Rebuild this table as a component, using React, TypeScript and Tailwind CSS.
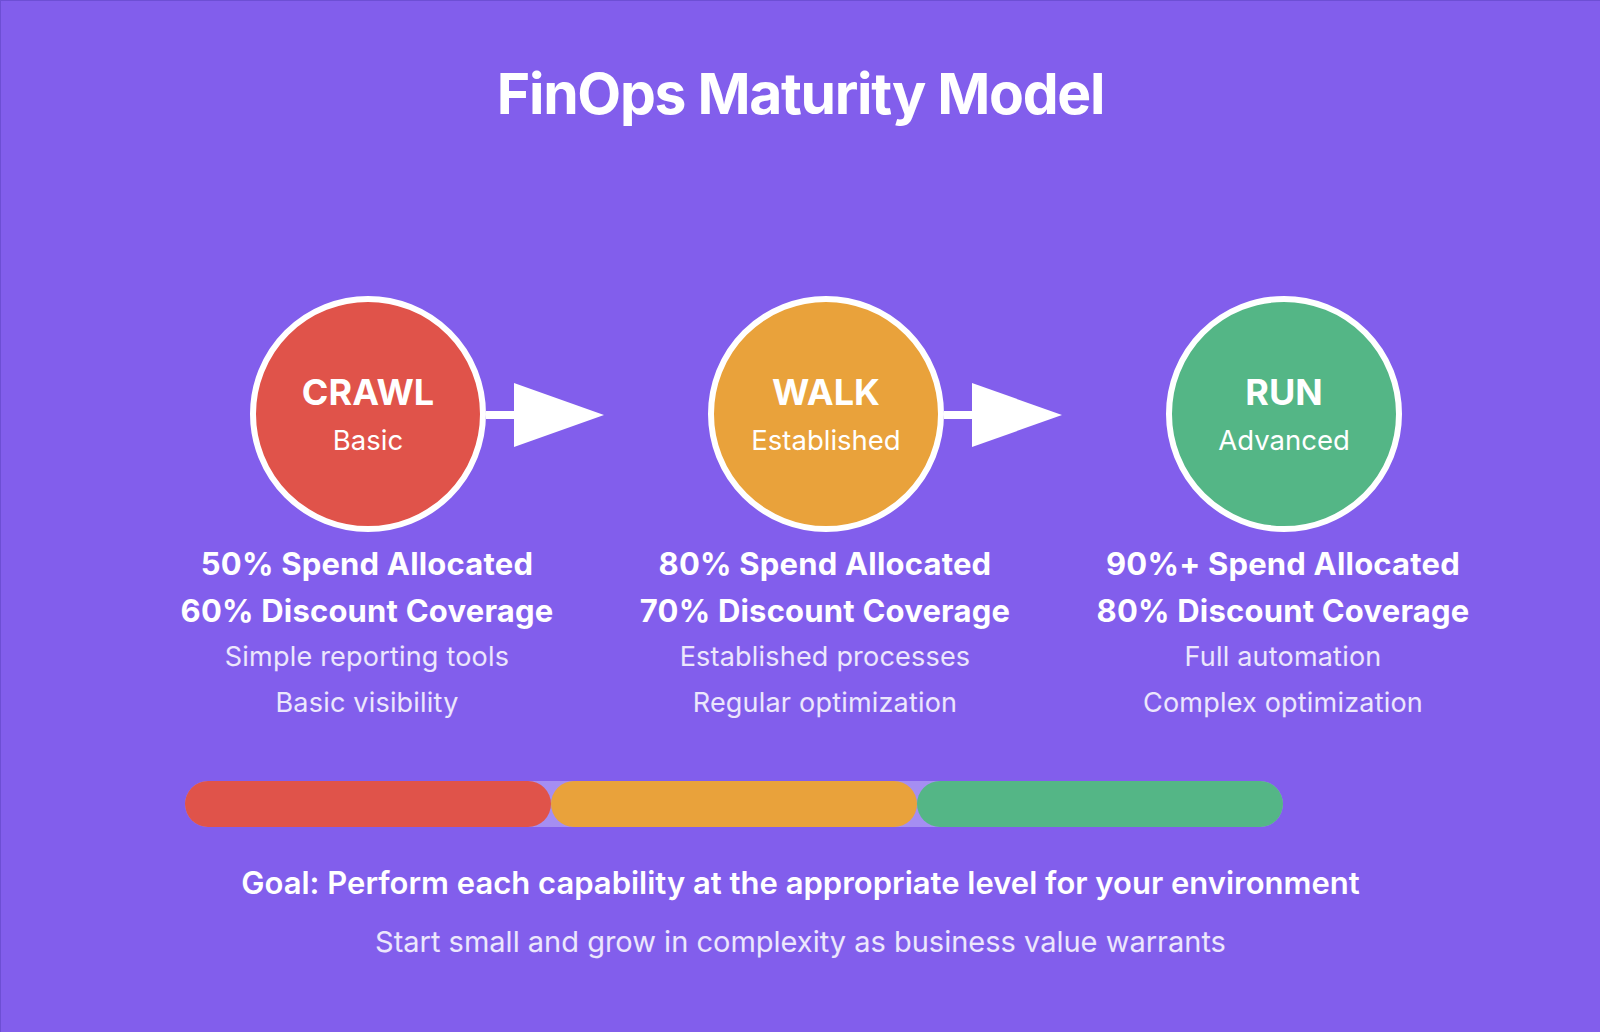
import React from "react";

const stages = [
  {
    name: "CRAWL",
    level: "Basic",
    color: "bg-[#e0534a]",
    lines: ["50% Spend Allocated", "60% Discount Coverage"],
    notes: ["Simple reporting tools", "Basic visibility"],
  },
  {
    name: "WALK",
    level: "Established",
    color: "bg-[#e9a23b]",
    lines: ["80% Spend Allocated", "70% Discount Coverage"],
    notes: ["Established processes", "Regular optimization"],
  },
  {
    name: "RUN",
    level: "Advanced",
    color: "bg-[#54b686]",
    lines: ["90%+ Spend Allocated", "80% Discount Coverage"],
    notes: ["Full automation", "Complex optimization"],
  },
];

const Arrow = () => (
  <svg width="120" height="64" viewBox="0 0 120 64" className="shrink-0 mt-[2px]">
    <rect x="0" y="28" width="32" height="8" fill="white" />
    <polygon points="28,0 118,32 28,64" fill="white" />
  </svg>
);

const App = () => {
  return (
    <div
      className="w-full h-[1032px] bg-[#825eec] border-t border-l border-[#6d4fd4] text-white overflow-hidden"
      style={{ fontFamily: "Inter, 'Noto Sans', sans-serif" }}
    >
      <h1 className="pt-[64px] text-center text-[57px] leading-none font-bold tracking-[-1.3px]">
        FinOps Maturity Model
      </h1>

      {/* circles + arrows */}
      <div className="mt-[174px] pl-[249px] flex items-center">
        {stages.map((s, i) => (
          <div key={s.name} className="flex items-center w-[458px] shrink-0">
            <div
              className={`w-[236px] h-[236px] shrink-0 rounded-full border-[6px] border-white ${s.color} flex flex-col items-center justify-center`}
            >
              <div className="text-[36px] leading-none font-bold">{s.name}</div>
              <div className="mt-[17px] text-[27.5px] leading-none">{s.level}</div>
            </div>
            {i < stages.length - 1 && <Arrow />}
          </div>
        ))}
      </div>

      {/* labels */}
      <div className="mt-[8px] pl-[137px] grid grid-cols-[458px_458px_458px]">
        {stages.map((s) => (
          <div key={s.name} className="flex flex-col items-center text-center">
            {s.lines.map((l) => (
              <div key={l} className="text-[31px] leading-[47px] font-bold tracking-[0.2px] whitespace-nowrap">
                {l}
              </div>
            ))}
            {s.notes.map((n) => (
              <div key={n} className="text-[27px] leading-[46px] tracking-[0.2px] text-white/85 whitespace-nowrap">
                {n}
              </div>
            ))}
          </div>
        ))}
      </div>

      {/* progress bar */}
      <div className="mt-[55px] ml-[184px] w-[1098px] h-[46px] rounded-full bg-[#a58ef2] flex">
        <div className="flex-1 rounded-full bg-[#e0534a]" />
        <div className="flex-1 rounded-full bg-[#e9a23b]" />
        <div className="flex-1 rounded-full bg-[#54b686]" />
      </div>

      <p className="mt-[38px] text-center text-[31px] leading-[36px] font-semibold">
        Goal: Perform each capability at the appropriate level for your environment
      </p>
      <p className="mt-[23px] text-center text-[29px] leading-[36px] text-white/85">
        Start small and grow in complexity as business value warrants
      </p>
    </div>
  );
};

export default App;
